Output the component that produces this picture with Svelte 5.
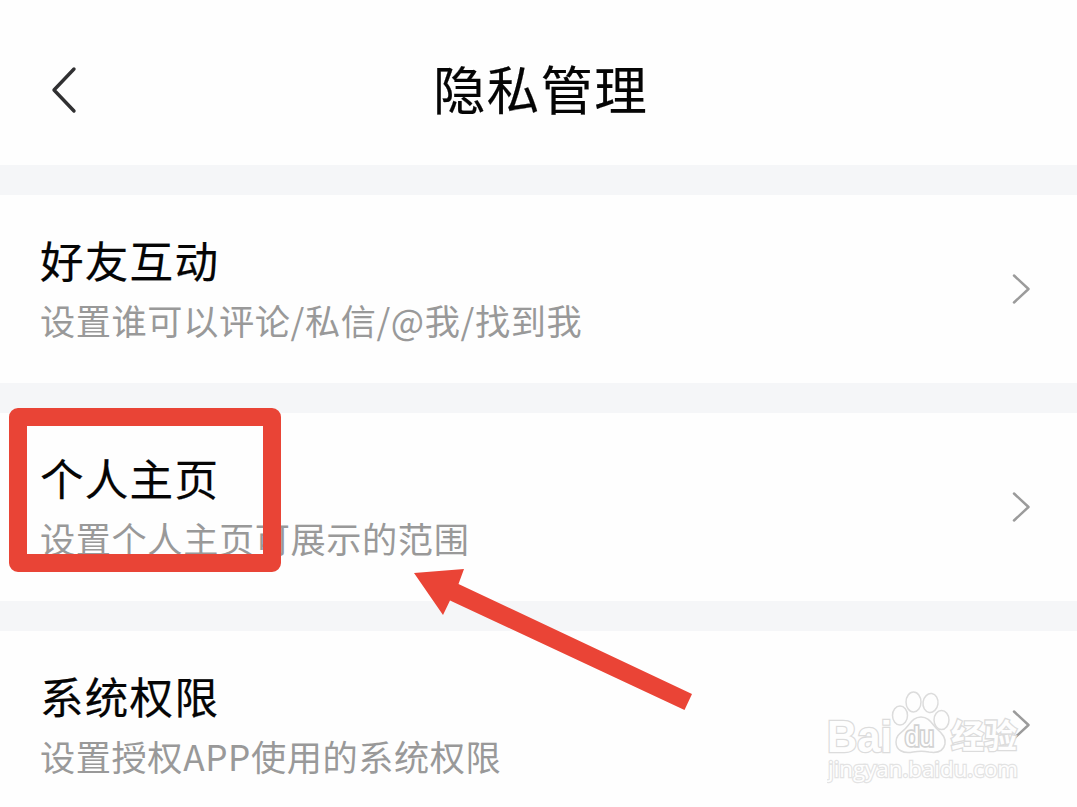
<script>
  const rows = [
    { title: '好友互动', desc: '设置谁可以评论/私信/@我/找到我' },
    { title: '个人主页', desc: '设置个人主页可展示的范围', marked: true },
    { title: '系统权限', desc: '设置授权APP使用的系统权限' }
  ];
</script>

<main class="page">
  <header class="header">
    <button class="back" aria-label="返回">
      <svg width="30" height="50" viewBox="0 0 30 50">
        <path d="M26 4 L6 25 L26 46" />
      </svg>
    </button>
    <h1>隐私管理</h1>
  </header>

  {#each rows as row}
    <section class="row">
      <div class="text">
        <h2>{row.title}</h2>
        <p>{row.desc}</p>
      </div>
      <svg class="chevron" width="20" height="32" viewBox="0 0 20 32">
        <path d="M3 2.5 L17.5 16 L3 29.5" />
      </svg>
      {#if row.marked}
        <div class="box"></div>
        <svg class="arrow" width="280" height="146" viewBox="0 0 280 146">
          <polygon points="1,5 51,1 45.5,16 279,126 271.5,142 37,32.5 30,47" />
        </svg>
      {/if}
    </section>
  {/each}

  <svg class="watermark" width="200" height="100" viewBox="0 0 200 100">
    <text class="brand" x="0" y="66" font-size="44" textLength="65" lengthAdjust="spacingAndGlyphs">Bai</text>
    <ellipse cx="73" cy="29.5" rx="7.5" ry="9.5" />
    <ellipse cx="86.5" cy="16" rx="7.5" ry="10" />
    <ellipse cx="103.5" cy="17" rx="7.5" ry="9.5" transform="rotate(8 103.5 17)" />
    <ellipse cx="114.5" cy="34" rx="7.5" ry="9.5" />
    <path d="M94 31 C102 31 105 38 110 43 C116 48 119 52 118 58 C116 67 108 67 102 66 C97 65 92 65 86 66 C76 68 69 64 69 56 C69 49 74 47 78 43 C83 38 86 31 94 31 Z" />
    <text class="du" x="78" y="60" font-size="27" textLength="29" lengthAdjust="spacingAndGlyphs">du</text>
    <text class="cjk" x="124" y="62" font-size="33" textLength="66" lengthAdjust="spacingAndGlyphs">经验</text>
    <text class="url" x="1" y="91" font-size="22" textLength="190" lengthAdjust="spacingAndGlyphs">jingyan.baidu.com</text>
  </svg>
</main>

<style>
  :global(body) {
    margin: 0;
    background: #fefefe;
  }

  .page {
    position: relative;
    height: 807px;
    overflow: hidden;
    background: #fefefe;
    font-family: 'Noto Sans CJK SC', sans-serif;
  }

  .header {
    display: grid;
    grid-template-columns: 140px 1fr 140px;
    align-items: center;
    height: 165px;
  }

  .back {
    display: flex;
    margin: 15px 0 0 48px;
    padding: 0;
    width: 30px;
    border: 0;
    background: none;
  }

  .back path {
    fill: none;
    stroke: #303032;
    stroke-width: 3.4;
    stroke-linecap: round;
    stroke-linejoin: round;
  }

  h1 {
    margin: 9px 0 0 4px;
    font-size: 52.5px;
    line-height: 80px;
    font-weight: 400;
    letter-spacing: 1.3px;
    text-align: center;
    color: #050505;
    -webkit-text-stroke: 0.2px #050505;
  }

  .row {
    position: relative;
    display: flex;
    align-items: center;
    justify-content: space-between;
    box-sizing: border-box;
    height: 218px;
    padding: 0 46px 0 40px;
    border-top: 30px solid #f5f6f8;
  }

  h2,
  p {
    margin: 0;
    font-weight: 400;
    white-space: nowrap;
  }

  h2 {
    font-size: 43.6px;
    line-height: 62px;
    letter-spacing: 1.2px;
    color: #050505;
    -webkit-text-stroke: 0.2px #050505;
  }

  p {
    font-size: 35.2px;
    line-height: 60px;
    letter-spacing: 0.6px;
    color: #999;
  }

  .chevron path {
    fill: none;
    stroke: #9b9b9b;
    stroke-width: 2.5;
    stroke-linecap: round;
    stroke-linejoin: round;
  }

  .box {
    position: absolute;
    top: -5px;
    left: 9px;
    width: 236px;
    height: 128px;
    border: 18px solid #e94436;
    border-radius: 9px;
  }

  .arrow {
    position: absolute;
    top: 155px;
    left: 413px;
    z-index: 1;
    fill: #ea4436;
  }

  .watermark {
    position: absolute;
    left: 827px;
    top: 686px;
    fill: #fefefe;
    stroke: #dcdcdc;
    stroke-width: 1.5;
  }

  .watermark text {
    paint-order: stroke;
    stroke-width: 2.6;
  }

  .brand,
  .du {
    font-family: 'Liberation Sans', sans-serif;
    font-weight: 700;
  }

  .watermark .du {
    font-weight: 400;
    stroke-width: 3.4;
    stroke: #d2d2d2;
  }

  .cjk {
    font-weight: 700;
  }

  .watermark .url {
    font-family: 'Open Sans', sans-serif;
    font-weight: 400;
    stroke: #e3e3e3;
    stroke-width: 2.4;
  }
</style>
